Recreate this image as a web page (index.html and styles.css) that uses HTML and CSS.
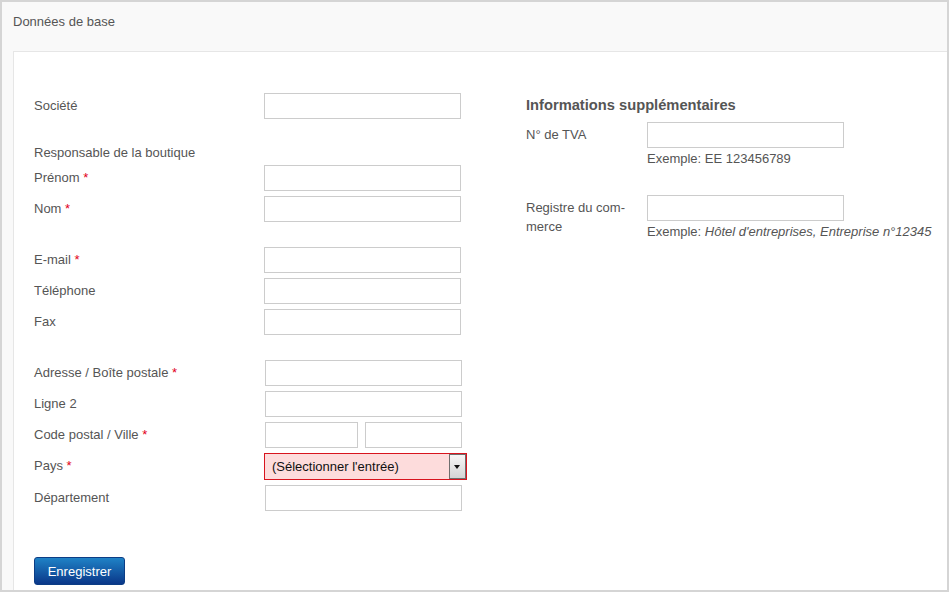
FILE: index.html
```html
<!DOCTYPE html>
<html lang="fr">
<head>
  <meta charset="UTF-8" />
  <title>Données de base</title>
  <link rel="stylesheet" href="styles.css">
</head>
<body>

  <div class="frame">
    <!-- Tab header -->
    <div class="tab-head">Données de base</div>

    <div class="panel">
      <div class="columns">

        <!-- === Main form column === -->
        <div class="col-main">
          <div class="group">
            <div class="row">
              <label class="label">Société</label>
              <input type="text" class="field" />
            </div>
          </div>

          <div class="group">
            <div class="subhead">Responsable de la boutique</div>
            <div class="row">
              <label class="label">Prénom <span class="req">*</span></label>
              <input type="text" class="field" />
            </div>
            <div class="row">
              <label class="label">Nom <span class="req">*</span></label>
              <input type="text" class="field" />
            </div>
          </div>

          <div class="group">
            <div class="row">
              <label class="label">E-mail <span class="req">*</span></label>
              <input type="text" class="field" />
            </div>
            <div class="row">
              <label class="label">Téléphone</label>
              <input type="text" class="field" />
            </div>
            <div class="row">
              <label class="label">Fax</label>
              <input type="text" class="field" />
            </div>
          </div>

          <div class="group group-address">
            <div class="row">
              <label class="label">Adresse / Boîte postale <span class="req">*</span></label>
              <input type="text" class="field" />
            </div>
            <div class="row">
              <label class="label">Ligne 2</label>
              <input type="text" class="field" />
            </div>
            <div class="row">
              <label class="label">Code postal / Ville <span class="req">*</span></label>
              <input type="text" class="field field-zip" />
              <input type="text" class="field field-city" />
            </div>
            <div class="row">
              <label class="label label-select">Pays <span class="req">*</span></label>
              <div class="select-wrap">
                <select class="select-box">
                  <option>(Sélectionner l'entrée)</option>
                </select>
                <span class="select-arrow"></span>
              </div>
            </div>
            <div class="row">
              <label class="label">Département</label>
              <input type="text" class="field" />
            </div>
          </div>

          <button class="btn-save">Enregistrer</button>
        </div>

        <!-- === Extra info column === -->
        <div class="col-extra">
          <h3>Informations supplémentaires</h3>
          <div class="row-extra">
            <label class="label-extra">N° de TVA</label>
            <div>
              <input type="text" class="field" />
              <p class="hint">Exemple: EE 123456789</p>
            </div>
          </div>
          <div class="row-extra">
            <label class="label-extra">Registre du com&shy;merce</label>
            <div>
              <input type="text" class="field" />
              <p class="hint">Exemple: <em>Hôtel d'entreprises, Entreprise n°12345</em></p>
            </div>
          </div>
        </div>

      </div>
    </div>
  </div>

</body>
</html>
```

FILE: styles.css
```css
/* Basic Resets */
* { margin: 0; padding: 0; box-sizing: border-box; }
body {
  font-family: "Liberation Sans", Arial, sans-serif;
  font-size: 13px;
  color: #555;
  background: #fff;
}

/* === Frame + tab header === */
.frame {
  height: 592px;
  border: 2px solid #d5d5d5;
  background: #f9f9f9;
  display: flex;
  flex-direction: column;
  overflow: hidden;
}
.tab-head {
  padding: 11px 11px 20px;
  line-height: 18px;
}
.panel {
  flex: 1;
  margin-left: 11px;
  background: #fff;
  border-top: 1px solid #e6e6e6;
  border-left: 1px solid #e6e6e6;
  padding: 41px 20px 0;
}
.columns { display: flex; }

/* === Main column === */
.col-main {
  width: 492px;
  flex-shrink: 0;
}
.group {
  display: flex;
  flex-direction: column;
  gap: 5px;
  margin-bottom: 25px;
}
.row { display: flex; }
.label {
  width: 230px;
  padding-top: 4px;
  line-height: 18px;
}
.group-address .label { width: 231px; }
.group-address .label-select { width: 230px; }
.req { color: #e2001a; }
.subhead {
  line-height: 18px;
  margin-bottom: -2px;
}

.field {
  width: 197px;
  height: 26px;
  border: 1px solid #ccc;
  background: #fff;
  font: inherit;
  padding: 0 4px;
}
.field-zip { width: 93px; margin-right: 7px; }
.field-city { width: 97px; }

/* Select (error state) */
.select-wrap {
  position: relative;
  width: 203px;
  height: 27px;
  border: 1px solid #d8141e;
  background: #fddcdc;
}
.select-box {
  appearance: none;
  -webkit-appearance: none;
  width: 100%;
  height: 100%;
  border: none;
  background: transparent;
  font-family: "Liberation Sans", Arial, sans-serif;
  font-size: 13px;
  color: #111;
  padding-left: 7px;
}
.select-arrow {
  position: absolute;
  top: 0;
  right: 0;
  width: 17px;
  height: 25px;
  border: 1px solid #6e6e6e;
  background: linear-gradient(#f7f7f7, #d4d4d4);
  pointer-events: none;
}
.select-arrow::after {
  content: "";
  position: absolute;
  left: 4px;
  top: 10px;
  border-left: 3.5px solid transparent;
  border-right: 3.5px solid transparent;
  border-top: 4px solid #111;
}

.btn-save {
  margin-top: 21px;
  width: 91px;
  height: 28px;
  border: 1px solid #0c3d85;
  border-radius: 3px;
  background: linear-gradient(#1f82c6, #0a3789);
  color: #fff;
  font-family: "Liberation Sans", Arial, sans-serif;
  font-size: 13px;
  cursor: pointer;
}

/* === Extra column === */
.col-extra { padding-top: 3px; }
.col-extra h3 {
  font-size: 14.7px;
  font-weight: bold;
  line-height: 18px;
  margin-bottom: 8px;
}
.row-extra {
  display: flex;
  margin-bottom: 27px;
}
.label-extra {
  width: 121px;
  flex-shrink: 0;
  padding: 3px 8px 0 0;
  line-height: 19px;
}
.hint {
  margin-top: 2px;
  line-height: 18px;
  white-space: nowrap;
}
```
